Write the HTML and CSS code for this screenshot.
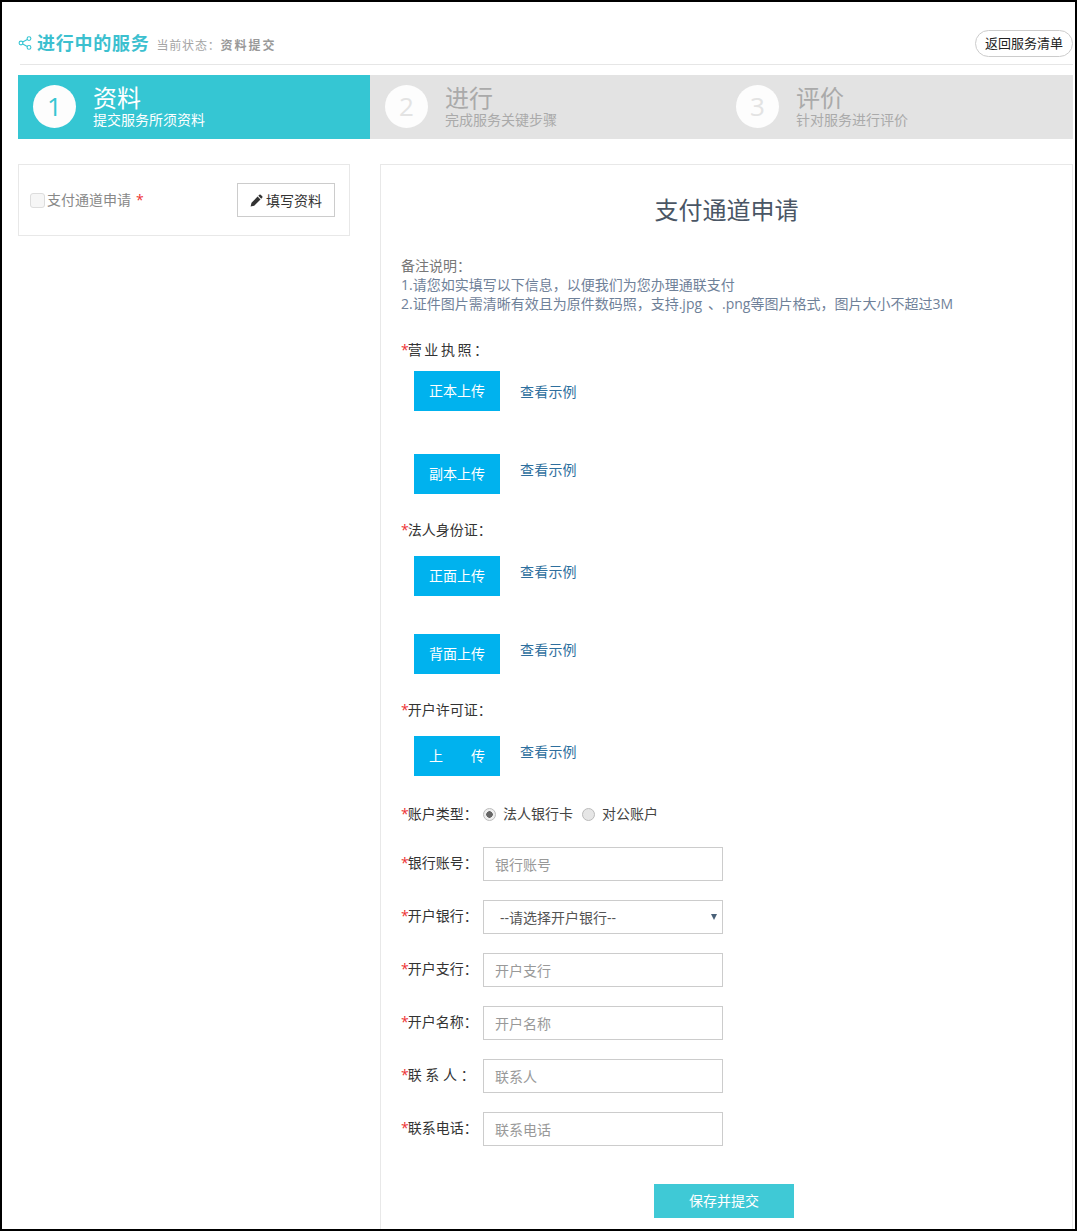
FILE: index.html
```html
<!DOCTYPE html>
<html lang="zh-CN">
<head>
<meta charset="utf-8">
<title>进行中的服务</title>
<link rel="stylesheet" href="styles.css">
</head>
<body>
<div class="frame">
  <header class="top">
    <div class="top-left">
      <svg class="share" width="14" height="14" viewBox="0 0 14 14" fill="none" stroke="#35c6d3" stroke-width="1.1"><circle cx="3" cy="7" r="1.9"/><circle cx="11" cy="2.6" r="1.9"/><circle cx="11" cy="11.4" r="1.9"/><path d="M4.7 6.1 9.3 3.5M4.7 7.9l4.6 2.6"/></svg>
      <h1 class="top-title">进行中的服务</h1>
      <span class="status">当前状态：<b>资料提交</b></span>
    </div>
    <a class="back">返回服务清单</a>
  </header>

  <div class="steps">
    <div class="step active"><span class="num">1</span><div class="step-text"><div class="step-name">资料</div><div class="step-sub">提交服务所须资料</div></div></div>
    <div class="step"><span class="num">2</span><div class="step-text"><div class="step-name">进行</div><div class="step-sub">完成服务关键步骤</div></div></div>
    <div class="step"><span class="num">3</span><div class="step-text"><div class="step-name">评价</div><div class="step-sub">针对服务进行评价</div></div></div>
  </div>

  <main class="main">
    <aside class="side">
      <label class="side-label"><input type="checkbox" class="check" disabled>支付通道申请 <i class="side-star">*</i></label>
      <a class="fill"><svg width="13" height="13" viewBox="0 0 13 13"><path fill="#333" d="M9.3.8a1 1 0 0 1 1.4 0l1.5 1.5a1 1 0 0 1 0 1.4l-1 1L8.3 1.8zM7.6 2.5l2.9 2.9-6.3 6.3L.6 12.6l.9-3.8z"/></svg>填写资料</a>
    </aside>

    <section class="panel">
      <h2 class="panel-title">支付通道申请</h2>
      <div class="note">
        <div class="note-head">备注说明：</div>
        <div>1.请您如实填写以下信息，以便我们为您办理通联支付</div>
        <div>2.证件图片需清晰有效且为原件数码照，支持.jpg &#8201;、.png等图片格式，图片大小不超过3M</div>
      </div>

      <div class="group-label license"><i>*</i><span class="spaced">营业执照：</span></div>
      <div class="upload first"><a class="up-btn">正本上传</a><a class="eg">查看示例</a></div>
      <div class="upload copy"><a class="up-btn">副本上传</a><a class="eg">查看示例</a></div>

      <div class="group-label"><i>*</i>法人身份证：</div>
      <div class="upload"><a class="up-btn">正面上传</a><a class="eg">查看示例</a></div>
      <div class="upload back-side"><a class="up-btn">背面上传</a><a class="eg">查看示例</a></div>

      <div class="group-label"><i>*</i>开户许可证：</div>
      <div class="upload"><a class="up-btn spread"><span>上</span><span>传</span></a><a class="eg">查看示例</a></div>

      <div class="field radios">
        <span class="f-label"><i>*</i>账户类型：</span>
        <label class="radio"><input type="radio" name="t" checked>法人银行卡</label>
        <label class="radio"><input type="radio" name="t">对公账户</label>
      </div>
      <div class="field"><span class="f-label"><i>*</i>银行账号：</span><input class="inp" placeholder="银行账号"></div>
      <div class="field"><span class="f-label"><i>*</i>开户银行：</span><div class="sel-wrap"><select class="sel"><option>--请选择开户银行--</option></select></div></div>
      <div class="field"><span class="f-label"><i>*</i>开户支行：</span><input class="inp" placeholder="开户支行"></div>
      <div class="field"><span class="f-label"><i>*</i>开户名称：</span><input class="inp" placeholder="开户名称"></div>
      <div class="field"><span class="f-label"><i>*</i>联 系 人 ：</span><input class="inp" placeholder="联系人"></div>
      <div class="field"><span class="f-label"><i>*</i>联系电话：</span><input class="inp" placeholder="联系电话"></div>

      <div class="actions"><a class="save">保存并提交</a></div>
    </section>
  </main>
</div>
</body>
</html>
```

FILE: styles.css
```css
* { box-sizing: border-box; }
html, body { margin: 0; padding: 0; background: #fff; }
body { font-family: "Open Sans", "Noto Sans CJK SC", sans-serif; font-size: 14px; color: #333; }
i { font-style: normal; }

.frame { width: 1077px; height: 1231px; border: 2px solid #000; overflow: hidden; padding: 0 2px 0 16px; background: #fff; }

.top { margin-left: 2px; height: 63px; border-bottom: 1px solid #e6e6e6; display: flex; justify-content: space-between; align-items: flex-end; padding-bottom: 7px; }
.top-left { display: flex; align-items: center; margin-left: -2px; margin-bottom: 1px; }
.share { flex: none; }
.top-title { margin: 0 0 0 5px; font-size: 18px; line-height: 26px; font-weight: 700; color: #3cc0cf; letter-spacing: .75px; }
.status { margin-left: 7px; font-size: 12px; color: #a5a5a5; padding-top: 3px; letter-spacing: .8px; }
.status b { color: #999; letter-spacing: 2px; }
.back { width: 98px; height: 27px; border: 1px solid #ccc; border-radius: 14px; font-size: 13px; line-height: 25px; text-align: center; color: #222; }

.steps { margin-top: 10px; display: flex; height: 64px; background: #e3e3e3; }
.step { flex: 0 0 351px; display: flex; align-items: flex-start; padding: 10px 0 0 15px; }
.step:last-child { flex: 1; }
.step.active { flex-basis: 352px; background: #35c6d3; }
.num { flex: none; width: 43px; height: 43px; border-radius: 50%; background: #fdfdfd; text-align: center; font-size: 26px; line-height: 43px; color: #e3e3e3; }
.active .num { color: #35c6d3; }
.step-text { margin-left: 17px; color: #aaa; }
.active .step-text { color: #fff; }
.step-name { font-size: 24px; line-height: 26px; }
.step-sub { font-size: 14px; line-height: 18px; }

.main { margin-top: 25px; display: flex; gap: 30px; align-items: flex-start; }
.side { flex: 0 0 332px; height: 72px; border: 1px solid #e8e8e8; display: flex; align-items: center; justify-content: space-between; padding: 0 14px 0 11px; }
.side-label { display: flex; align-items: center; color: #888; font-size: 14px; margin-bottom: 2px; }
.check { appearance: none; margin: 2px 2px 0 0; width: 15px; height: 15px; border: 1px solid #ddd; border-radius: 3px; background: #f6f6f6; }
.side-star { color: #e33; margin-left: 5px; }
.fill { width: 98px; height: 34px; border: 1px solid #ccc; display: flex; align-items: center; justify-content: center; gap: 3px; color: #333; font-size: 14px; }

.panel { flex: 1; height: 1100px; border: 1px solid #e8e8e8; padding: 0 0 0 20px; }
.panel-title { margin: 30px 0 0 -20px; font-size: 24px; line-height: 30px; font-weight: 400; text-align: center; color: #4a5665; }
.note { margin-top: 31px; font-size: 14px; line-height: 19px; color: #6f8199; }
.note-head { color: #777; }

.group-label { font-size: 14px; line-height: 20px; color: #333; margin-top: 0; }
.group-label i, .f-label i { color: #e33; margin-right: -1px; }
.license { margin-top: 26.5px; }
.spaced { letter-spacing: 2.6px; }
.upload { display: flex; align-items: flex-start; margin: 16px 0 0 13px; }
.first { margin-top: 11px; }
.copy { margin-top: 43px; }
.back-side { margin-top: 38px; }
.copy + .group-label, .back-side + .group-label { margin-top: 26px; }
.up-btn { flex: none; width: 86px; height: 40px; background: #00b2ee; color: #fff; font-size: 14px; line-height: 40px; text-align: center; }
.spread { display: flex; justify-content: space-between; padding: 0 15px; }
.eg { margin: 7px 0 0 20px; color: #2e6f9e; font-size: 14px; line-height: 18px; letter-spacing: .2px; }
.first .eg { margin-top: 12px; }
.first .up-btn { line-height: 39px; }

.field { display: flex; align-items: center; margin-top: 19px; height: 34px; }
.f-label { flex: 0 0 82px; color: #333; font-size: 14px; margin-bottom: 4px; }
.radios { margin-top: 20px; height: 34px; margin-bottom: -2px; }
.radios .f-label { margin-bottom: 0; }
.radio { display: flex; align-items: center; color: #444; margin-right: 9px; }
.radio input { appearance: none; margin: 3px 7px 0 0; width: 13px; height: 13px; border-radius: 50%; border: 1px solid #bbb; background: #e6e6e6; }
.radio input:checked { background: radial-gradient(circle, #666 0 3px, #eee 3.5px); }
.inp, .sel { width: 240px; height: 34px; border: 1px solid #ccc; background: #fff; font: inherit; font-size: 14px; padding: 2px 11px 0; border-radius: 0; outline: none; }
.inp::placeholder { color: #999; opacity: 1; }
.sel-wrap { position: relative; width: 240px; height: 34px; }
.sel-wrap::after { content: ""; position: absolute; right: 6px; top: 14px; border: 3.5px solid transparent; border-top: 6px solid #4a6178; border-bottom: 0; }
.sel { appearance: none; color: #555; padding-left: 16px; }

.actions { margin: 38px 0 0 253px; }
.save { display: block; width: 140px; height: 34px; background: #3fc9d6; color: #fff; font-size: 14px; line-height: 34px; text-align: center; }
```
